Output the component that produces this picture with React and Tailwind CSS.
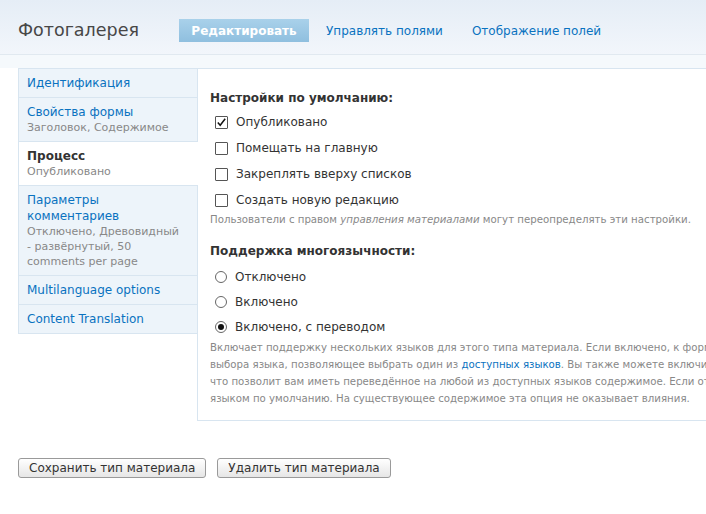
import React from 'react';

const tabs = [
  { title: 'Идентификация' },
  { title: 'Свойства формы', sub: 'Заголовок, Содержимое' },
  { title: 'Процесс', sub: 'Опубликовано', active: true },
  { title: 'Параметры комментариев', sub: 'Отключено, Древовидный - развёрнутый, 50 comments per page' },
  { title: 'Multilanguage options' },
  { title: 'Content Translation' },
];

const checks = [
  { label: 'Опубликовано', checked: true },
  { label: 'Помещать на главную' },
  { label: 'Закреплять вверху списков' },
  { label: 'Создать новую редакцию' },
];

const radios = [
  { label: 'Отключено' },
  { label: 'Включено' },
  { label: 'Включено, с переводом', checked: true },
];

const CheckBox = ({ checked }) => (
  <span className="relative w-[13px] h-[13px] border border-[#555] rounded-[1px] bg-white shrink-0">
    {checked && (
      <svg viewBox="0 0 13 13" className="absolute left-[-1px] top-[-1px] w-[13px] h-[13px]">
        <path d="M2.8 6.6 L5.2 9.3 L10.2 2.8" fill="none" stroke="#111" strokeWidth="1.5" />
      </svg>
    )}
  </span>
);

const Radio = ({ checked }) => (
  <span className="w-[12px] h-[12px] rounded-full border border-[#666] bg-white shrink-0 flex items-center justify-center">
    {checked && <span className="w-[6px] h-[6px] rounded-full bg-[#111]" />}
  </span>
);

export default function App() {
  return (
    <div className="w-[706px] h-[514px] overflow-hidden bg-white font-['DejaVu_Sans',sans-serif] text-[#333]">
      {/* Header */}
      <div className="h-[55px] bg-gradient-to-b from-[#e5edf6] to-[#f2f6fb] border-b border-[#e1e9f0] flex items-center pl-[18px] pt-[7px]">
        <h1 className="w-[161px] text-[17.5px] text-[#474747] leading-none">Фотогалерея</h1>
        <span className="h-[23px] w-[130px] flex items-center justify-center bg-gradient-to-b from-[#a9d1ea] to-[#8fbfdf] text-white text-[12px] font-bold">
          Редактировать
        </span>
        <span className="ml-[17px] text-[12px] text-[#0a72c0]">Управлять полями</span>
        <span className="ml-[29px] text-[12px] text-[#0a72c0]">Отображение полей</span>
      </div>
      <div className="h-[13px] bg-[#f5f9fc]" />

      {/* Body */}
      <div className="flex pl-[18px]">
        <ul className="w-[180px] shrink-0 border border-[#d8e5f0] bg-[#edf4fa] self-start relative z-10 -mr-px">
          {tabs.map((t, i) => (
            <li
              key={i}
              className={
                'pl-[8px] pr-[12px] py-[6px] ' +
                (i > 0 ? 'border-t border-[#d8e5f0] ' : '') +
                (t.active ? 'bg-white -mr-px' : '')
              }
            >
              <div className={'leading-[16px] text-[12px] ' + (t.active ? 'font-bold text-[#333]' : 'text-[#0a72c0]')}>{t.title}</div>
              {t.sub && <div className="text-[11px] leading-[15px] text-[#888]">{t.sub}</div>}
            </li>
          ))}
        </ul>

        <div className="flex-1 min-w-0 border-l border-t border-b border-[#d8e5f0] pl-[12px] pt-[21px] pb-[13px]">
          <div className="text-[12px] font-bold leading-[16px] text-[#333]">Настройки по умолчанию:</div>
          <div className="mt-[3px]">
            {checks.map((c, i) => (
              <div key={i} className="h-[26px] flex items-center pl-[5px] gap-[8px] text-[12px] text-[#333]">
                <CheckBox checked={c.checked} />
                <span>{c.label}</span>
              </div>
            ))}
          </div>
          <div className="text-[10.2px] leading-[14px] text-[#888] whitespace-nowrap">
            Пользователи с правом <em>управления материалами</em> могут переопределять эти настройки.
          </div>

          <div className="mt-[16px] text-[12px] font-bold leading-[16px] text-[#333]">Поддержка многоязычности:</div>
          <div className="mt-[5px]">
            {radios.map((r, i) => (
              <div key={i} className="h-[25px] flex items-center pl-[5px] gap-[8px] text-[12px] text-[#333]">
                <Radio checked={r.checked} />
                <span>{r.label}</span>
              </div>
            ))}
          </div>
          <div className="text-[10.2px] leading-[17px] text-[#888] whitespace-nowrap">
            <div>Включает поддержку нескольких языков для этого типа материала. Если включено, к форме редактирования будет добавлен элемент</div>
            <div>
              выбора языка, позволяющее выбрать один из <span className="text-[#0a72c0]">доступных языков</span>. Вы также можете включить перевод для этого типа материала,
            </div>
            <div>что позволит вам иметь переведённое на любой из доступных языков содержимое. Если отключено, новые материалы сохраняются с</div>
            <div>языком по умолчанию. На существующее содержимое эта опция не оказывает влияния.</div>
          </div>
        </div>
      </div>

      {/* Buttons */}
      <div className="flex gap-[11px] pl-[18px] mt-[37px]">
        <button className="h-[20px] px-[10px] border border-[#9a9a9a] rounded-[3px] bg-gradient-to-b from-white to-[#e6e6e6] text-[12px] text-[#333] leading-none">
          Сохранить тип материала
        </button>
        <button className="h-[20px] px-[10px] border border-[#9a9a9a] rounded-[3px] bg-gradient-to-b from-white to-[#e6e6e6] text-[12px] text-[#333] leading-none">
          Удалить тип материала
        </button>
      </div>
    </div>
  );
}
